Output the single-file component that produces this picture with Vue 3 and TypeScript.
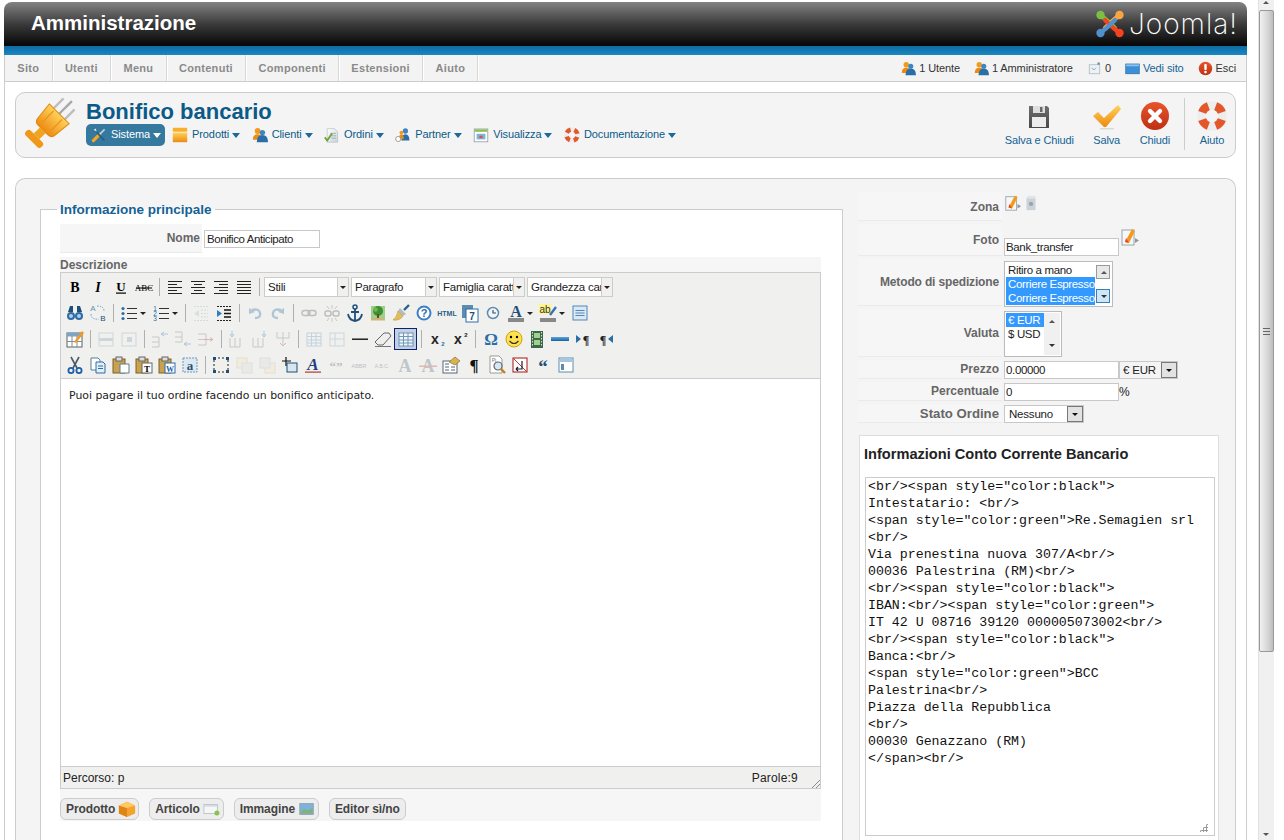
<template>
  <div class="page">
    <svg class="sprite" width="0" height="0" aria-hidden="true">
      <defs>
        <linearGradient id="g-orange" x1="0" y1="0" x2="0" y2="1"><stop offset="0" stop-color="#ffd25a"/><stop offset="1" stop-color="#ee8a12"/></linearGradient>
        <linearGradient id="g-red" x1="0" y1="0" x2="0" y2="1"><stop offset="0" stop-color="#e8552c"/><stop offset="1" stop-color="#bf2f12"/></linearGradient>
        <linearGradient id="g-blue" x1="0" y1="0" x2="0" y2="1"><stop offset="0" stop-color="#5aa7e0"/><stop offset="1" stop-color="#1c5f9e"/></linearGradient>
        <linearGradient id="g-paper" x1="0" y1="0" x2="1" y2="1"><stop offset="0" stop-color="#ffffff"/><stop offset="1" stop-color="#c9d3dc"/></linearGradient>
        <linearGradient id="g-disk" x1="0" y1="0" x2="0" y2="1"><stop offset="0" stop-color="#6e6e6e"/><stop offset="1" stop-color="#484848"/></linearGradient>
      </defs>

      <symbol id="plug" viewBox="0 0 50 50">
        <g transform="rotate(45 25 25)">
          <rect x="16" y="-2" width="2.400" height="15" fill="#bdbdbd"/>
          <rect x="23.800" y="-6" width="2.400" height="19" fill="#a8a8a8"/>
          <rect x="31.600" y="-2" width="2.400" height="15" fill="#bdbdbd"/>
          <path d="M11 12h28l-2 19q-1 4-5 4H18q-4 0-5-4z" fill="url(#g-orange)" stroke="#e08a12" stroke-width="1"/>
          <path d="M19 14v17M31 14v17" stroke="#e8961c" stroke-width="1.200"/>
          <rect x="21" y="35" width="8" height="9" fill="#f1a322"/>
          <rect x="14" y="44" width="22" height="7" rx="3" fill="#f0981a"/>
        </g>
      </symbol>

      <symbol id="tools" viewBox="0 0 20 20">
        <path d="M3 17 11 9" stroke="#f5a623" stroke-width="4" stroke-linecap="round"/>
        <path d="M17 3 10 10" stroke="#bcd6e6" stroke-width="2"/>
        <path d="M4 3 16 16" stroke="#2a5f86" stroke-width="2.400" stroke-linecap="round"/>
        <path d="M3 3.500 6 2 7 6z" fill="#d4e4ee"/>
      </symbol>
      <symbol id="box" viewBox="0 0 20 20">
        <rect x="1" y="7" width="18" height="12" fill="url(#g-orange)"/>
        <rect x="1" y="1" width="18" height="5" rx="1" fill="#f7b02e"/>
      </symbol>
      <symbol id="users" viewBox="0 0 20 20">
        <circle cx="7" cy="5" r="3.600" fill="#f39a1e"/>
        <path d="M1 16q0-7 6-7t6 7z" fill="#ec8a12"/>
        <circle cx="13" cy="7" r="3.400" fill="#3f85bf"/>
        <path d="M6 19q0-9 7-9t7 9z" fill="#2a6ea8"/>
      </symbol>
      <symbol id="orders" viewBox="0 0 20 20">
        <path d="M4 2h9l4 4v13H4z" fill="url(#g-paper)" stroke="#a9b4bb" stroke-width=".7"/>
        <path d="M8 8h7M8 11h7M9 14h6" stroke="#97a3ab"/>
        <path d="M1 13l3 4 6-9" fill="none" stroke="#6aa532" stroke-width="2.200"/>
      </symbol>
      <symbol id="partner" viewBox="0 0 20 20">
        <circle cx="13" cy="5" r="3.300" fill="#3f85bf"/>
        <path d="M8 17q0-8 5-8t5 8z" fill="#2a6ea8"/>
        <circle cx="8" cy="7" r="2.400" fill="#f39a1e"/>
        <path d="M5 15q0-6 3-6t3 6z" fill="#ec8a12"/>
        <circle cx="4" cy="15" r="3.200" fill="#fff" stroke="#8a8a8a"/>
      </symbol>
      <symbol id="view" viewBox="0 0 20 20">
        <rect x="1.500" y="2.500" width="17" height="16" fill="#fff" stroke="#8f9ba3"/>
        <rect x="2" y="3" width="16" height="3" fill="#8cc152"/>
        <rect x="4.500" y="8.500" width="11" height="7" fill="#7fb2d9"/>
        <rect x="8" y="11" width="4" height="3" fill="#d9534f"/>
      </symbol>
      <symbol id="life" viewBox="0 0 20 20">
        <circle cx="10" cy="10" r="7" fill="none" stroke="#ededed" stroke-width="5.600"/>
        <circle cx="10" cy="10" r="7" fill="none" stroke="#e2582a" stroke-width="5.600" stroke-dasharray="6 5" stroke-dashoffset="-2.500" pathLength="44"/>
      </symbol>
      <symbol id="msg" viewBox="0 0 20 20">
        <rect x="3" y="5" width="14" height="12" fill="#eef2f5" stroke="#aab4bb"/>
        <path d="M6 9l3 3 3-3" fill="none" stroke="#6d8ea8"/>
        <rect x="14" y="2" width="3" height="3" fill="#5d8cb0"/>
      </symbol>
      <symbol id="site" viewBox="0 0 20 20">
        <rect x="1" y="4" width="18" height="13" fill="#3d8fd6" stroke="#2a6ea8"/>
        <rect x="1.500" y="4.500" width="17" height="2.500" fill="#8cc3ee"/>
      </symbol>
      <symbol id="exit" viewBox="0 0 20 20">
        <circle cx="10" cy="10" r="9" fill="url(#g-red)"/>
        <rect x="8.400" y="4" width="3.200" height="8" rx="1" fill="#fff"/>
        <circle cx="10" cy="14.800" r="1.800" fill="#fff"/>
      </symbol>
      <symbol id="floppy" viewBox="0 0 30 30">
        <path d="M5 5h18l2 2v20H5z" fill="url(#g-disk)"/>
        <rect x="8" y="16" width="14" height="10" fill="#ececec"/>
        <rect x="9" y="5" width="12" height="7" fill="#dedede"/>
        <rect x="16" y="6" width="2.500" height="5" fill="#6a6a6a"/>
      </symbol>
      <symbol id="check" viewBox="0 0 30 30">
        <path d="M1 15l5-4 6 6L26 4l3 4-15 18h-2z" fill="url(#g-orange)"/>
        <rect x="8" y="27" width="14" height="1.400" fill="#d8d8d8"/>
      </symbol>
      <symbol id="close" viewBox="0 0 30 30">
        <circle cx="15" cy="15" r="14" fill="url(#g-red)"/>
        <path d="M10 10l10 10M20 10 10 20" stroke="#fff" stroke-width="4.400" stroke-linecap="round"/>
      </symbol>
      <symbol id="pencil" viewBox="0 0 20 20">
        <rect x="2" y="3" width="12" height="15" fill="#f7f7f7" stroke="#9aa4ab"/>
        <path d="M5 15 12 2l3 2-6 12z" fill="#f39a1e"/>
        <path d="M5 15 6 11l3 5z" fill="#e2482a"/>
        <path d="M15 11l4 2.500-4 2.500z" fill="#8a9aa5"/>
      </symbol>
      <symbol id="trash" viewBox="0 0 20 20">
        <path d="M5 4h10v14H5z" fill="#ccd3d8"/>
        <rect x="6" y="2" width="9" height="3" fill="#e1e5e8"/>
        <circle cx="10" cy="11" r="2.400" fill="#9aa6ae"/>
      </symbol>
      <symbol id="joomla" viewBox="0 0 30 30">
        <g fill="none" stroke-width="4.400" stroke-linecap="round">
          <path d="M6 7Q10 9 20 19" stroke="#7ac143"/>
          <path d="M24 7Q20 9 10 19" stroke="#f9a541"/>
          <path d="M24 23Q20 21 10 11" stroke="#f44321"/>
          <path d="M6 23Q10 21 20 11" stroke="#5091cd"/>
        </g>
        <circle cx="5.500" cy="6" r="4.200" fill="#7ac143"/>
        <circle cx="24.500" cy="6" r="4.200" fill="#f9a541"/>
        <circle cx="24.500" cy="24" r="4.200" fill="#f44321"/>
        <circle cx="5.500" cy="24" r="4.200" fill="#5091cd"/>
      </symbol>
      <symbol id="cube" viewBox="0 0 20 20">
        <path d="M10 2 19 6v9l-9 4-9-4V6z" fill="#f3a42c"/>
        <path d="M10 9v10l-9-4V6z" fill="#e08418"/>
        <path d="M10 2 19 6l-9 3-9-3z" fill="#ffc862"/>
      </symbol>
      <symbol id="article" viewBox="0 0 20 20">
        <rect x="1" y="5" width="15" height="10" fill="#f4f6f7" stroke="#b8c2c9"/>
        <rect x="1.500" y="5.500" width="14" height="2" fill="#d5dde2"/>
        <circle cx="15.500" cy="14.500" r="2.800" fill="#8cc152"/>
      </symbol>
      <symbol id="picture" viewBox="0 0 20 20">
        <rect x="2" y="4" width="15" height="12" fill="#7fb2d9" stroke="#8fa0ac"/>
        <path d="M3 13l4-3 4 2 5-3v6H3z" fill="#7eb27a"/>
      </symbol>

      <symbol id="a-left" viewBox="0 0 20 20"><path d="M3 4.500h14M3 7.500h9M3 10.500h14M3 13.500h9M3 16.500h14" stroke="#222"/></symbol>
      <symbol id="a-center" viewBox="0 0 20 20"><path d="M3 4.500h14M6 7.500h8M3 10.500h14M6 13.500h8M3 16.500h14" stroke="#222"/></symbol>
      <symbol id="a-right" viewBox="0 0 20 20"><path d="M3 4.500h14M8 7.500h9M3 10.500h14M8 13.500h9M3 16.500h14" stroke="#222"/></symbol>
      <symbol id="a-full" viewBox="0 0 20 20"><path d="M3 4.500h14M3 7.500h14M3 10.500h14M3 13.500h14M3 16.500h14" stroke="#222"/></symbol>
      <symbol id="find" viewBox="0 0 20 20">
        <path d="M3 9l2-6h3v6M17 9l-2-6h-3v6" fill="#1f4e79"/>
        <circle cx="6" cy="13" r="4" fill="#2f6aa3"/><circle cx="14" cy="13" r="4" fill="#2f6aa3"/>
        <circle cx="6" cy="13" r="2" fill="#a9cfee"/><circle cx="14" cy="13" r="2" fill="#a9cfee"/>
      </symbol>
      <symbol id="ul" viewBox="0 0 20 20"><path d="M8 5.500h10M8 10.500h10M8 15.500h10" stroke="#333"/><circle cx="4" cy="5.500" r="1.600" fill="#2a6ea8"/><circle cx="4" cy="10.500" r="1.600" fill="#2a6ea8"/><circle cx="4" cy="15.500" r="1.600" fill="#2a6ea8"/></symbol>
      <symbol id="outdent" viewBox="0 0 20 20"><path d="M3 3.500h14M10 7h7M10 10.500h7M10 14h7M3 17.500h14" stroke="#aaa" stroke-dasharray="2 1"/><path d="M8 7v7l-5-3.500z" fill="#9fc3de"/></symbol>
      <symbol id="indent" viewBox="0 0 20 20"><path d="M3 3.500h14M3 17.500h14" stroke="#222" stroke-dasharray="2 1"/><path d="M10 7h7M10 10.500h7M10 14h7" stroke="#111" stroke-width="1.400"/><path d="M3 7v7l5-3.500z" fill="#2a7fc4"/></symbol>
      <symbol id="undo" viewBox="0 0 20 20"><path d="M7 7q7-2 8 3t-5 5" fill="none" stroke="#2a6ea8" stroke-width="2.400"/><path d="M4 5v6l6-2z" fill="#2a6ea8"/></symbol>
      <symbol id="redo" viewBox="0 0 20 20"><path d="M13 7q-7-2-8 3t5 5" fill="none" stroke="#2a6ea8" stroke-width="2.400"/><path d="M16 5v6l-6-2z" fill="#2a6ea8"/></symbol>
      <symbol id="link" viewBox="0 0 20 20"><rect x="3" y="7.500" width="8" height="5" rx="2.500" fill="none" stroke="#555" stroke-width="1.400"/><rect x="9" y="7.500" width="8" height="5" rx="2.500" fill="none" stroke="#555" stroke-width="1.400"/></symbol>
      <symbol id="unlink" viewBox="0 0 20 20"><rect x="3" y="8" width="6" height="5" rx="2" fill="none" stroke="#555" stroke-width="1.500"/><rect x="11" y="8" width="6" height="5" rx="2" fill="none" stroke="#555" stroke-width="1.500"/><path d="M10 2v4M5 3l2 3M15 3l-2 3M10 15v4M5 18l2-3M15 18l-2-3" stroke="#777"/></symbol>
      <symbol id="anchor" viewBox="0 0 20 20"><circle cx="10" cy="4" r="2" fill="none" stroke="#1f4e79" stroke-width="1.500"/><path d="M10 6v12M6 9h8M3 11q1 6 7 7 6-1 7-7" fill="none" stroke="#1f4e79" stroke-width="1.800"/></symbol>
      <symbol id="image" viewBox="0 0 20 20"><rect x="3" y="3" width="14" height="14" fill="#9fcf8a"/><circle cx="10" cy="8" r="5" fill="#3f8f34"/><circle cx="7.500" cy="6.500" r="2.200" fill="#6cba4e"/><rect x="9" y="11" width="2" height="5" fill="#6b4a20"/><rect x="3" y="15" width="14" height="2.500" fill="#c8b77a"/></symbol>
      <symbol id="cleanup" viewBox="0 0 20 20"><path d="M13 7 18 2" stroke="#2a5f86" stroke-width="2.400"/><path d="M9 5l6 6-3 2-5-5z" fill="#b3bcc2"/><path d="M7 8l5 5q-3 5-10 4 4-3 5-9z" fill="#e3bd5d" stroke="#b48f2c" stroke-width=".5"/></symbol>
      <symbol id="time" viewBox="0 0 20 20"><circle cx="10" cy="10" r="5.500" fill="#f3f6f8" stroke="#5d8cb0" stroke-width="1.500"/><path d="M10 7v3h3" fill="none" stroke="#33536c" stroke-width="1.200"/></symbol>
      <symbol id="window" viewBox="0 0 20 20"><rect x="3" y="3" width="14" height="14" fill="#dbe8f3" stroke="#4f88ba"/><path d="M5.500 7.500h9M5.500 10h9M5.500 12.500h9" stroke="#4f88ba"/></symbol>
      <symbol id="table-edit" viewBox="0 0 20 20"><rect x="2" y="4" width="15" height="14" fill="#fff" stroke="#566"/><rect x="2" y="4" width="15" height="3.500" fill="#7aa5c9"/><path d="M7 7v11M12 7v11M2 12.500h15" stroke="#889"/><path d="M9 13 17 2l2 2-8 10z" fill="#f39a1e"/></symbol>
      <symbol id="row-a" viewBox="0 0 20 20"><rect x="3" y="4" width="14" height="13" fill="#eef2f5" stroke="#8fa0ac"/><rect x="3" y="9" width="14" height="3" fill="#8fa0ac"/></symbol>
      <symbol id="row-b" viewBox="0 0 20 20"><rect x="3" y="4" width="14" height="13" fill="#eef2f5" stroke="#8fa0ac"/><rect x="8" y="8" width="5" height="5" fill="#8fa0ac"/></symbol>
      <symbol id="ins-up" viewBox="0 0 20 20"><path d="M2 8h7v10H2M2 13h7" fill="none" stroke="#777"/><path d="M11 5h7M11 5l3-2M11 5l3 2" fill="none" stroke="#2a6ea8"/></symbol>
      <symbol id="ins-dn" viewBox="0 0 20 20"><path d="M2 3h7v10H2M2 8h7" fill="none" stroke="#777"/><path d="M11 15h7M11 15l3-2M11 15l3 2" fill="none" stroke="#2a6ea8"/></symbol>
      <symbol id="ins-del" viewBox="0 0 20 20"><path d="M2 5h8v11H2M2 10.500h8" fill="none" stroke="#777"/><path d="M8 10.500h9M17 10.500l-3-2M17 10.500l-3 2" fill="none" stroke="#c0392b"/></symbol>
      <symbol id="col-a" viewBox="0 0 20 20"><path d="M3 9v9h10V9M8 9v9" fill="none" stroke="#777"/><path d="M5 2v6M5 8 3 5M5 8l2-3" fill="none" stroke="#2a6ea8"/></symbol>
      <symbol id="col-b" viewBox="0 0 20 20"><path d="M3 9v9h10V9M8 9v9" fill="none" stroke="#777"/><path d="M14 2v6M14 8l-2-3M14 8l2-3" fill="none" stroke="#2a6ea8"/></symbol>
      <symbol id="col-del" viewBox="0 0 20 20"><path d="M4 3v6h12V3M10 3v14" fill="none" stroke="#777"/><path d="M10 17l-3-3M10 17l3-3" fill="none" stroke="#c0392b"/></symbol>
      <symbol id="grid" viewBox="0 0 20 20"><rect x="3" y="4" width="14" height="13" fill="#f2f6f9" stroke="#6e96b8"/><path d="M3 7.500h14M3 11h14M3 14h14M7.500 4v13M12 4v13" stroke="#6e96b8"/></symbol>
      <symbol id="split" viewBox="0 0 20 20"><rect x="3" y="4" width="14" height="13" fill="#eef2f5" stroke="#8fa0ac"/><path d="M8 4v13M3 10h14" stroke="#8fa0ac"/></symbol>
      <symbol id="hr" viewBox="0 0 20 20"><rect x="2" y="9.500" width="16" height="1.400" fill="#111"/></symbol>
      <symbol id="eraser" viewBox="0 0 20 20"><path d="M2 13 11 4h5l2 3-8 9H5z" fill="#eee" stroke="#666"/><rect x="2" y="17" width="16" height="1" fill="#777"/></symbol>
      <symbol id="smile" viewBox="0 0 20 20"><circle cx="10" cy="10" r="8" fill="#ffe14d" stroke="#c9a514"/><circle cx="7" cy="8" r="1.200"/><circle cx="13" cy="8" r="1.200"/><path d="M5.500 12q4.500 5 9 0" fill="none" stroke="#333" stroke-width="1.200"/></symbol>
      <symbol id="media" viewBox="0 0 20 20"><rect x="4" y="2" width="12" height="17" fill="#3a6a4a"/><rect x="7" y="4" width="6" height="5" fill="#a4d08e"/><rect x="7" y="11" width="6" height="5" fill="#a4d08e"/><path d="M5.500 3v15M14.500 3v15" stroke="#ddd" stroke-dasharray="1.500 1.500"/></symbol>
      <symbol id="hr-blue" viewBox="0 0 20 20"><rect x="1" y="8" width="18" height="4" fill="url(#g-blue)"/></symbol>
      <symbol id="cut" viewBox="0 0 20 20"><path d="M6 2l6 11M14 2 8 13" stroke="#4d5a66" stroke-width="1.600"/><circle cx="6" cy="15.500" r="2.600" fill="none" stroke="#1f5fa8" stroke-width="1.800"/><circle cx="14" cy="15.500" r="2.600" fill="none" stroke="#1f5fa8" stroke-width="1.800"/></symbol>
      <symbol id="copy" viewBox="0 0 20 20"><path d="M3 3h7l2 2v10H3z" fill="#fff" stroke="#5d7c95"/><path d="M8 7h7l2 2v9H8z" fill="#e3eef6" stroke="#2a6ea8"/><path d="M10 11h5M10 13.500h5" stroke="#2a6ea8"/></symbol>
      <symbol id="paste" viewBox="0 0 20 20"><rect x="2" y="4" width="12" height="14" fill="#c9a24f" stroke="#7a6128"/><rect x="5" y="2" width="6" height="4" fill="#ddd" stroke="#666"/><path d="M9 9h9v9H9z" fill="#fff" stroke="#5d7c95"/></symbol>
      <symbol id="layer" viewBox="0 0 20 20"><rect x="3" y="3" width="14" height="14" fill="none" stroke="#222" stroke-dasharray="2 2"/><path d="M2 2h3v3H2zM15 2h3v3h-3zM2 15h3v3H2zM15 15h3v3h-3z" fill="#1f4e79"/></symbol>
      <symbol id="fwd" viewBox="0 0 20 20"><rect x="3" y="3" width="10" height="10" fill="#f3e6bd" stroke="#c9bb8c"/><rect x="8" y="8" width="10" height="10" fill="#ddd" stroke="#bbb"/></symbol>
      <symbol id="back" viewBox="0 0 20 20"><rect x="8" y="8" width="10" height="10" fill="#f3e6bd" stroke="#c9bb8c"/><rect x="3" y="3" width="10" height="10" fill="#ddd" stroke="#bbb"/></symbol>
      <symbol id="absolute" viewBox="0 0 20 20"><path d="M6 2v9M2 6h9" stroke="#111" stroke-width="1.200"/><rect x="7" y="8" width="10" height="9" fill="#d9e6f0" stroke="#1f4e79"/></symbol>
      <symbol id="attribs" viewBox="0 0 20 20"><rect x="2" y="6" width="14" height="12" fill="#fff" stroke="#567"/><path d="M4 9h4M4 12h4M4 15h4M10 12h4M10 15h4" stroke="#567"/><path d="M8 7 14 2l5 4-5 4z" fill="#d9b34e" stroke="#7a6128" stroke-width=".6"/></symbol>
      <symbol id="nbsp" viewBox="0 0 20 20"><rect x="3" y="3" width="14" height="14" fill="#fff" stroke="#a11"/><path d="M3 3l14 14" stroke="#c0392b"/><path d="M12 6v8h-6M6 14l2-2M6 14l2 2" fill="none" stroke="#123" stroke-width="1.200"/></symbol>
      <symbol id="template" viewBox="0 0 20 20"><rect x="3" y="3" width="14" height="14" fill="#fff" stroke="#5d8cb0"/><rect x="4" y="4" width="12" height="3" fill="#a7c7df"/><rect x="5" y="9" width="3" height="6" fill="#5d8cb0"/></symbol>
    </svg>

    <div class="shell">
      <header class="header">
        <span class="header-title">Amministrazione</span>
        <span class="brand">
          <svg class="brand-mark"><use href="#joomla"/></svg>
          <span class="brand-name">Joomla!</span>
        </span>
      </header>
      <div class="stripe"></div>

      <nav class="menu">
        <a v-for="m in mainMenu" :key="m" class="menu-item">{{ m }}</a>
        <div class="status">
          <span v-for="s in statusItems" :key="s.label" class="status-item" :class="{ 'status-link': s.link }">
            <svg class="ic15"><use :href="'#' + s.icon"/></svg>{{ s.label }}
          </span>
        </div>
      </nav>

      <div class="content">
        <section class="toolbar">
          <svg class="toolbar-icon"><use href="#plug"/></svg>
          <div class="toolbar-head">
            <h1 class="title">Bonifico bancario</h1>
            <div class="submenu">
              <span v-for="(s, i) in subMenu" :key="s.label" class="sub-item" :class="{ 'sub-active': i === 0 }">
                <svg class="ic16"><use :href="'#' + s.icon"/></svg>
                <span class="sub-label">{{ s.label }}</span><i class="caret"></i>
              </span>
            </div>
          </div>
          <div class="actions">
            <span v-for="a in actions" :key="a.label" class="action" :class="{ 'action-sep': a.sep }">
              <svg class="ic30"><use :href="'#' + a.icon"/></svg>
              {{ a.label }}
            </span>
          </div>
        </section>

        <section class="card">
          <fieldset class="main-form">
            <legend>Informazione principale</legend>
            <div class="name-row">
              <label class="name-label">Nome</label>
              <input class="text-input name-input" value="Bonifico Anticipato" readonly>
            </div>
            <div class="desc-label">Descrizione</div>
            <div class="editor">
              <div class="ed-toolbar">
                <div class="ed-row">
                  <template v-for="(t, i) in edRows[0]" :key="i">
                    <span v-if="t.sep" class="ed-sep"></span>
                    <span v-else class="ed-btn">
                      <svg class="ic20" viewBox="0 0 20 20" v-html="iconMarkup(t.icon)"></svg>
                    </span>
                  </template>
                  <span v-for="s in edSelects" :key="s.text" class="ed-select" :class="s.cls">
                    <span class="ed-select-text">{{ s.text }}</span><span class="ed-select-arrow"></span>
                  </span>
                </div>
                <div v-for="(row, r) in edRows.slice(1)" :key="r" class="ed-row">
                  <template v-for="(t, i) in row" :key="i">
                    <span v-if="t.sep" class="ed-sep"></span>
                    <span v-else class="ed-btn" :class="{ 'ed-off': t.off, 'ed-on': t.on, 'ed-split': t.split }">
                      <svg class="ic20" viewBox="0 0 20 20" v-html="iconMarkup(t.icon)"></svg>
                    </span>
                  </template>
                </div>
              </div>
              <div class="ed-body">Puoi pagare il tuo ordine facendo un bonifico anticipato.</div>
              <div class="ed-status">
                <span>Percorso: p</span>
                <span class="ed-count">Parole:9</span>
                <span class="grip"></span>
              </div>
            </div>
            <div class="ed-buttons">
              <span v-for="b in editorButtons" :key="b.label" class="pill">
                {{ b.label }}<svg v-if="b.icon" class="pill-icon"><use :href="'#' + b.icon"/></svg>
              </span>
            </div>
          </fieldset>

          <aside class="side">
            <div class="field h-zona">
              <label class="field-label">Zona</label>
              <div class="field-value top">
                <svg class="ic18"><use href="#pencil"/></svg><svg class="ic18"><use href="#trash"/></svg>
              </div>
            </div>
            <div class="field h-foto">
              <label class="field-label">Foto</label>
              <div class="field-value foto">
                <input class="text-input side-input" value="Bank_transfer" readonly>
                <svg class="ic20 foto-icon"><use href="#pencil"/></svg>
              </div>
            </div>
            <div class="field h-metodo">
              <label class="field-label label-tight">Metodo di spedizione</label>
              <div class="field-value">
                <div class="listbox list-metodo">
                  <div class="list-options">
                    <div class="opt">Ritiro a mano</div>
                    <div class="opt sel">Corriere Espresso</div>
                    <div class="opt sel">Corriere Espresso</div>
                  </div>
                  <div class="list-scroll boxed">
                    <span class="sb-up"></span><span class="sb-down hot"></span>
                  </div>
                </div>
              </div>
            </div>
            <div class="field h-valuta">
              <label class="field-label">Valuta</label>
              <div class="field-value">
                <div class="listbox list-valuta">
                  <div class="list-options">
                    <div class="opt sel">€ EUR</div>
                    <div class="opt">$ USD</div>
                  </div>
                  <div class="list-scroll">
                    <span class="sb-up"></span><span class="sb-down"></span>
                  </div>
                </div>
              </div>
            </div>
            <div class="field h-line">
              <label class="field-label">Prezzo</label>
              <div class="field-value">
                <input class="text-input side-input" value="0.00000" readonly>
                <span class="combo combo-eur">€ EUR<i class="combo-arrow"></i></span>
              </div>
            </div>
            <div class="field h-line">
              <label class="field-label">Percentuale</label>
              <div class="field-value">
                <input class="text-input side-input" value="0" readonly>
                <span class="percent">%</span>
              </div>
            </div>
            <div class="field h-line">
              <label class="field-label label-large">Stato Ordine</label>
              <div class="field-value">
                <span class="combo combo-state">Nessuno<i class="combo-arrow"></i></span>
              </div>
            </div>

            <div class="bank">
              <h3 class="bank-title">Informazioni Conto Corrente Bancario</h3>
              <textarea class="bank-text" :value="bankText" readonly spellcheck="false" wrap="off"></textarea>
              <span class="bank-grip"></span>
            </div>
          </aside>
        </section>
      </div>
    </div>

    <div class="scrollbar">
      <span class="scroll-up"></span>
      <div class="scroll-thumb"><span class="scroll-grip"></span></div>
      <span class="scroll-down"></span>
    </div>
  </div>
</template>

<script setup lang="ts">
interface Tool {
  icon: string
  sep?: boolean
  off?: boolean
  on?: boolean
  split?: boolean
}

// "|" = separator, "~" = disabled, "!" = pressed, "+" = with dropdown arrow
const parseRow = (spec: string): Tool[] =>
  spec.split(' ').map((token) => {
    if (token === '|') return { icon: '', sep: true }
    return {
      icon: token.replace(/[~!+]/g, ''),
      off: token.startsWith('~'),
      on: token.startsWith('!'),
      split: token.endsWith('+'),
    }
  })

const edRows: Tool[][] = [
  'bold italic underline strike | a-left a-center a-right a-full |',
  'find replace | ul+ ol+ | ~outdent indent | ~undo ~redo | ~link ~unlink anchor image cleanup help html date time forecolor+ backcolor+ window',
  'table-edit | ~row-a ~row-b | ~ins-up ~ins-dn ~ins-del | ~col-a ~col-b ~col-del | ~grid ~split hr eraser !grid | sub sup | omega smile media hr-blue ltr rtl',
  'cut copy paste paste-t paste-w select-all | layer ~fwd ~back absolute styleprops ~cite ~abbr ~abc-dot ~big-a ~strike-a attribs pilcrow preview nbsp quote template',
].map(parseRow)

const SERIF = 'font-family="Liberation Serif" font-weight="700" text-anchor="middle"'
const SANS = 'font-family="Liberation Sans" text-anchor="middle"'
const CLIPBOARD = '<rect x="2" y="4" width="12" height="14" fill="#c9a24f" stroke="#7a6128"/><rect x="5" y="2" width="6" height="4" fill="#ddd" stroke="#666"/>'

// buttons that carry a letter keep it in place as real svg text, the rest come from the sprite
const letterIcons: Record<string, string> = {
  bold: `<text x="10" y="15" ${SERIF} font-size="14">B</text>`,
  italic: `<text x="10" y="15" ${SERIF} font-style="italic" font-size="14">I</text>`,
  underline: `<text x="10" y="14" ${SERIF} font-size="13">U</text><rect x="5" y="15.5" width="10" height="1.2"/>`,
  strike: `<text x="10" y="14" font-family="Liberation Serif" text-anchor="middle" font-size="9">ABC</text><rect x="2" y="10.5" width="16" height="1"/>`,
  replace: `<text x="5" y="8" ${SANS} font-size="8" fill="#6d8ea8">A</text><text x="15" y="18" ${SANS} font-size="8" fill="#1f4e79">B</text><path d="M3 11q0 6 8 5M9 3q7 0 7 5" fill="none" stroke="#5da0d6" stroke-dasharray="1.4 1.2"/>`,
  ol: `<path d="M8 5.5h10M8 10.5h10M8 15.5h10" stroke="#333"/><text x="4" y="8" ${SANS} font-size="6.5" fill="#2a6ea8">1</text><text x="4" y="13" ${SANS} font-size="6.5" fill="#2a6ea8">2</text><text x="4" y="18" ${SANS} font-size="6.5" fill="#2a6ea8">3</text>`,
  help: `<circle cx="10" cy="10" r="6.5" fill="#fff" stroke="#3d7fc4" stroke-width="2"/><text x="10" y="14" ${SANS} font-weight="700" font-size="11" fill="#2a6ea8">?</text>`,
  html: `<text x="10" y="13" ${SANS} font-weight="700" font-size="7" fill="#2a5f86">HTML</text>`,
  date: `<rect x="2" y="2" width="11" height="13" fill="#5d8cb0"/><rect x="6" y="6" width="12" height="13" fill="#fff" stroke="#2a6ea8"/><text x="12" y="17" ${SANS} font-weight="700" font-size="10" fill="#1f4e79">7</text>`,
  forecolor: `<text x="10" y="14" ${SERIF} font-size="16" fill="#1f4e79">A</text><rect x="2" y="15" width="16" height="4" fill="#888"/>`,
  backcolor: `<rect x="1" y="1" width="12" height="10" fill="#fff58a"/><text x="7" y="10" ${SANS} font-size="10" fill="#333">ab</text><path d="M12 12 18 4" stroke="#3d6fb5" stroke-width="2.4"/><rect x="2" y="15" width="16" height="4" fill="#888"/>`,
  sub: `<text x="8" y="15" ${SANS} font-weight="700" font-size="14" fill="#222">x</text><text x="16" y="17" ${SANS} font-weight="700" font-size="6" fill="#2a6ea8">2</text>`,
  sup: `<text x="8" y="15" ${SANS} font-weight="700" font-size="14" fill="#222">x</text><text x="16" y="8" ${SANS} font-weight="700" font-size="6" fill="#222">2</text>`,
  omega: `<text x="10" y="16" ${SERIF} font-size="17" fill="#2a6ea8">Ω</text>`,
  ltr: `<path d="M3 6v8l5-4z" fill="#2a6ea8"/><text x="13" y="15" ${SERIF} font-size="12" fill="#222">¶</text>`,
  rtl: `<text x="7" y="15" ${SERIF} font-size="12" fill="#222">¶</text><path d="M17 6v8l-5-4z" fill="#2a6ea8"/>`,
  'paste-t': `${CLIPBOARD}<rect x="8" y="8" width="10" height="10" fill="#fff" stroke="#666"/><text x="13" y="16.5" ${SERIF} font-size="9">T</text>`,
  'paste-w': `${CLIPBOARD}<rect x="8" y="8" width="10" height="10" fill="#fff" stroke="#2a6ea8"/><text x="13" y="16.5" ${SERIF} font-size="8" fill="#1f5fa8">W</text>`,
  'select-all': `<rect x="3" y="3" width="14" height="14" fill="#dce8f2" stroke="#6e96b8" stroke-dasharray="2 1"/><text x="10" y="15" ${SERIF} font-size="13" fill="#1f4e79">a</text>`,
  styleprops: `<text x="10" y="15" ${SERIF} font-style="italic" font-size="17" fill="#1f3f80">A</text><rect x="2" y="16.5" width="16" height="1.2" fill="#b03a2e"/>`,
  cite: `<text x="10" y="16" ${SERIF} font-size="13" fill="#556">“”</text>`,
  abbr: `<text x="10" y="13" ${SANS} font-size="5.5" fill="#556">ABBR</text>`,
  'abc-dot': `<text x="10" y="13" ${SANS} font-size="5" fill="#556">A.B.C.</text>`,
  'big-a': `<text x="10" y="17" ${SERIF} font-size="18" fill="#59707f">A</text>`,
  'strike-a': `<text x="10" y="17" ${SERIF} font-size="18" fill="#59707f">A</text><rect x="1" y="10.5" width="18" height="1.4" fill="#c0392b"/>`,
  pilcrow: `<text x="10" y="16" ${SERIF} font-size="17" fill="#111">¶</text>`,
  preview: `<path d="M3 1h9l3 3v14H3z" fill="#fff" stroke="#999"/><text x="7" y="7" ${SANS} font-size="5" fill="#778">Pi</text><circle cx="11" cy="11" r="4" fill="#d6e8f5" stroke="#666" stroke-width="1.2"/><path d="M14 14l4 4" stroke="#c17f1c" stroke-width="2.4"/>`,
  quote: `<text x="10" y="18" ${SERIF} font-size="19" fill="#1f4e79">“</text>`,
}

const iconMarkup = (name: string) => letterIcons[name] ?? `<use href="#${name}"/>`

const edSelects = [
  { text: 'Stili', cls: 'w-stili' },
  { text: 'Paragrafo', cls: 'w-par' },
  { text: 'Famiglia caratteri', cls: 'w-fam' },
  { text: 'Grandezza carattere', cls: 'w-gr' },
]

const mainMenu = ['Sito', 'Utenti', 'Menu', 'Contenuti', 'Componenti', 'Estensioni', 'Aiuto']

const statusItems = [
  { icon: 'users', label: '1 Utente' },
  { icon: 'users', label: '1 Amministratore' },
  { icon: 'msg', label: '0' },
  { icon: 'site', label: 'Vedi sito', link: true },
  { icon: 'exit', label: 'Esci' },
]

const subMenu = [
  { icon: 'tools', label: 'Sistema' },
  { icon: 'box', label: 'Prodotti' },
  { icon: 'users', label: 'Clienti' },
  { icon: 'orders', label: 'Ordini' },
  { icon: 'partner', label: 'Partner' },
  { icon: 'view', label: 'Visualizza' },
  { icon: 'life', label: 'Documentazione' },
]

const actions = [
  { icon: 'floppy', label: 'Salva e Chiudi' },
  { icon: 'check', label: 'Salva' },
  { icon: 'close', label: 'Chiudi' },
  { icon: 'life', label: 'Aiuto', sep: true },
]

const editorButtons = [
  { label: 'Prodotto', icon: 'cube' },
  { label: 'Articolo', icon: 'article' },
  { label: 'Immagine', icon: 'picture' },
  { label: 'Editor sì/no' },
]

const bankText = `<br/><span style="color:black">
Intestatario: <br/>
<span style="color:green">Re.Semagien srl
<br/>
Via prenestina nuova 307/A<br/>
00036 Palestrina (RM)<br/>
<br/><span style="color:black">
IBAN:<br/><span style="color:green">
IT 42 U 08716 39120 000005073002<br/>
<br/><span style="color:black">
Banca:<br/>
<span style="color:green">BCC
Palestrina<br/>
Piazza della Repubblica
<br/>
00030 Genazzano (RM)
</span><br/>`
</script>

<style>
html, body {
  margin: 0;
  overflow: hidden;
  background: #fff;
}
</style>

<style scoped>
.page {
  display: flex;
  width: 1284px;
  height: 840px;
  overflow: hidden;
  background: #fff;
  font-family: "Liberation Sans", Arial, sans-serif;
  font-size: 12px;
  color: #333;
}

.sprite {
  flex: none;
}

.ic15 { width: 15px; height: 15px; flex: none; }
.ic16 { width: 16px; height: 16px; flex: none; }
.ic18 { width: 18px; height: 18px; flex: none; }
.ic20 { width: 20px; height: 20px; flex: none; }
.ic30 { width: 30px; height: 30px; flex: none; }

.shell {
  flex: none;
  width: 1243px;
  margin-left: 4px;
  padding-top: 2px;
}

.header {
  display: flex;
  align-items: center;
  justify-content: space-between;
  height: 44px;
  padding: 0 9px 0 27px;
  border-radius: 8px 8px 0 0;
  background: linear-gradient(#838383, #3b3b3b 50%, #050505);
}

.header-title {
  margin-bottom: 2px;
  font-size: 20.500px;
  font-weight: 700;
  color: #fff;
}

.brand {
  display: flex;
  align-items: center;
  gap: 4px;
}

.brand-mark {
  width: 30px;
  height: 30px;
}

.brand-name {
  font-family: Inter, "Open Sans", sans-serif;
  font-weight: 200;
  font-size: 28px;
  line-height: 34px;
  letter-spacing: 1px;
  color: #fff;
}

.stripe {
  height: 9px;
  background: linear-gradient(#0c6ba3, #1b87c0);
}

.menu {
  display: flex;
  align-items: stretch;
  height: 26px;
  background: #f3f3f3;
  border-left: 1px solid #ccc;
  border-right: 1px solid #ccc;
  border-bottom: 1px solid #ccc;
}

.menu-item {
  display: flex;
  align-items: center;
  padding: 0 12.300px;
  border-right: 1px solid #d8d8d8;
  box-shadow: 1px 0 0 #fff;
  font-size: 11px;
  font-weight: 700;
  letter-spacing: .3px;
  color: #8a8a8a;
}

.status {
  display: flex;
  align-items: center;
  gap: 14px;
  margin-left: auto;
  padding-right: 10px;
  font-size: 11px;
  letter-spacing: -.1px;
}

.status-item {
  display: flex;
  align-items: center;
  gap: 3px;
}

.status-link {
  color: #146295;
}

.content {
  height: 757px;
  padding: 10px 10px 0;
  border-left: 1px solid #ccc;
  border-right: 1px solid #ccc;
}

.toolbar {
  display: flex;
  height: 66px;
  box-sizing: border-box;
  padding-left: 9px;
  border: 1px solid #ccc;
  border-radius: 10px;
  background: #f4f4f4;
}

.toolbar-icon {
  width: 50px;
  height: 50px;
  margin-top: 5px;
}

.toolbar-head {
  margin-left: 11px;
  padding-top: 6px;
}

.title {
  margin: 0;
  font-size: 22px;
  line-height: 25px;
  font-weight: 700;
  color: #0b5a87;
}

.submenu {
  display: flex;
  align-items: center;
  height: 22px;
}

.sub-item {
  display: flex;
  align-items: center;
  gap: 4px;
  height: 22px;
  margin-right: 11.500px;
  font-size: 11px;
  letter-spacing: -.1px;
  color: #0b5a87;
}

.sub-label {
  padding-bottom: 2px;
}

.sub-item.sub-active {
  margin-right: 7px;
  padding: 0 4px 0 5px;
  border-radius: 5px;
  background: #35799f;
  color: #fff;
}

.caret {
  width: 0;
  height: 0;
  margin-left: -1px;
  border: 4px solid transparent;
  border-top: 5px solid #1c6a9a;
  border-bottom: 0;
}

.sub-active .caret {
  border-top-color: #fff;
}

.actions {
  display: flex;
  align-items: flex-start;
  gap: 18px;
  margin-left: auto;
  padding: 8px 8px 0 0;
}

.action {
  display: flex;
  flex-direction: column;
  align-items: center;
  gap: 3px;
  font-size: 11px;
  letter-spacing: -.15px;
  color: #146295;
}

.action-sep {
  position: relative;
  margin-left: 9px;
}

.action-sep::before {
  content: "";
  position: absolute;
  left: -13px;
  top: -3px;
  width: 1px;
  height: 52px;
  background: #ccc;
}

.card {
  display: flex;
  margin-top: 20px;
  padding: 23px 0 0 24px;
  height: 660px;
  border: 1px solid #ccc;
  border-bottom: 0;
  border-radius: 10px 10px 0 0;
  background: #f4f4f4;
}

.main-form {
  flex: none;
  width: 803px;
  height: 700px;
  box-sizing: border-box;
  margin: 0;
  padding: 7px 21px 0 19px;
  border: 1px solid #ccc;
  background: #fff;
}

.main-form legend {
  margin-left: -3px;
  padding: 0 3px;
  font-size: 13.500px;
  font-weight: 700;
  color: #146295;
}

.name-row {
  display: flex;
  align-items: center;
  height: 29px;
}

.name-label {
  width: 142px;
  height: 29px;
  line-height: 29px;
  box-sizing: border-box;
  padding-right: 2px;
  flex: none;
  text-align: right;
  font-weight: 700;
  color: #666;
  background: #f6f6f6;
  border-bottom: 1px solid #eaeaea;
}

.text-input {
  height: 18px;
  box-sizing: border-box;
  margin: 0;
  padding: 0 1px;
  border: 1px solid #c8c8c8;
  font-family: inherit;
  font-size: 11.500px;
  letter-spacing: -.35px;
  color: #222;
  background: #fff;
  outline: none;
}

.name-input {
  width: 116px;
  margin-left: 2px;
  padding-left: 2px;
  letter-spacing: -.42px;
}

.desc-label {
  margin-top: 4px;
  height: 15px;
  line-height: 16px;
  font-weight: 700;
  color: #666;
  background: #f6f6f6;
}

.editor {
  border: 1px solid #ccc;
}

.ed-toolbar {
  height: 106px;
  box-sizing: border-box;
  padding: 1px 2px 0;
  background: #f0f0ee;
  border-bottom: 1px solid #ccc;
}

.ed-row {
  display: flex;
  align-items: center;
  height: 26px;
}

.ed-btn {
  flex: none;
  display: flex;
  align-items: center;
  justify-content: flex-start;
  box-sizing: border-box;
  width: 23px;
  height: 22px;
  padding-left: 1.500px;
}

.ed-off svg {
  opacity: .32;
}

.ed-on {
  border: 1px solid #0a246a;
  background: #c2cfe5;
  padding-left: .5px;
}

.ed-split {
  position: relative;
  width: 32px;
}

.ed-split::after {
  content: "";
  position: absolute;
  right: 3px;
  top: 10px;
  border: 3px solid transparent;
  border-top: 3px solid #222;
  border-bottom: 0;
}

.ed-sep {
  flex: none;
  width: 1px;
  height: 18px;
  margin: 0 3.500px;
  background: #b0b0b0;
}

.ed-select {
  flex: none;
  display: flex;
  box-sizing: border-box;
  height: 20px;
  margin-right: 2px;
  border: 1px solid #ccc;
  background: #fff;
  font-size: 11.500px;
  letter-spacing: -.25px;
  color: #222;
  line-height: 18px;
}

.w-stili { width: 85px; margin-left: 1px; }
.w-par { width: 86px; }
.w-fam { width: 86px; }
.w-gr { width: 86px; }

.ed-select-text {
  flex: 1;
  min-width: 0;
  padding-left: 3px;
  overflow: hidden;
  white-space: nowrap;
}

.ed-select-arrow {
  position: relative;
  flex: none;
  width: 10px;
  border-left: 1px solid #ccc;
  background: #f0f0ee;
}

.ed-select-arrow::after {
  content: "";
  position: absolute;
  left: 2px;
  top: 8px;
  border: 3px solid transparent;
  border-top: 3px solid #222;
  border-bottom: 0;
}

.ed-body {
  height: 387px;
  box-sizing: border-box;
  padding: 10px 8px;
  background: #fff;
  font-family: "DejaVu Sans", Verdana, sans-serif;
  font-size: 10.900px;
  line-height: 14px;
  color: #222;
}

.ed-status {
  display: flex;
  align-items: center;
  height: 22px;
  box-sizing: border-box;
  padding: 0 0 0 2px;
  border-top: 1px solid #ccc;
  background: #f0f0ee;
  color: #222;
}

.ed-count {
  margin-left: auto;
  margin-right: 12px;
  letter-spacing: .2px;
}

.grip {
  width: 10px;
  height: 10px;
  align-self: flex-end;
  background: repeating-linear-gradient(135deg, transparent 0 2px, #888 2px 3px);
  clip-path: polygon(100% 0, 100% 100%, 0 100%);
}

.ed-buttons {
  display: flex;
  gap: 10px;
  height: 32px;
  box-sizing: border-box;
  padding-top: 9px;
  background: #f6f6f6;
}

.pill {
  display: flex;
  align-items: center;
  gap: 3px;
  height: 22px;
  box-sizing: border-box;
  padding: 0 5px;
  border: 1px solid #ccc;
  border-radius: 6px;
  background: #ededed;
  font-weight: 700;
  letter-spacing: -.1px;
  color: #444;
}

.pill-icon {
  width: 18px;
  height: 18px;
  margin-right: -3px;
}

.side {
  flex: none;
  display: flex;
  flex-direction: column;
  gap: 3px;
  width: 362px;
  margin-left: 15px;
  margin-top: -10px;
}

.field {
  display: flex;
  flex: none;
}

.h-zona { height: 29px; }
.h-foto { height: 32px; }
.h-metodo { height: 47px; }
.h-valuta { height: 48px; }
.h-line { height: 19px; }

.field-label {
  flex: none;
  display: flex;
  align-items: center;
  justify-content: flex-end;
  width: 144px;
  box-sizing: border-box;
  padding-right: 3px;
  font-weight: 700;
  color: #666;
  background: #f6f6f6;
  border-bottom: 1px solid #ebebeb;
}

.h-zona .field-label,
.h-foto .field-label {
  padding-top: 1px;
}

.label-tight {
  letter-spacing: -.15px;
}

.label-large {
  font-size: 13.200px;
}

.field-value {
  display: flex;
  align-items: center;
  padding-left: 2px;
}

.field-value.top {
  align-items: flex-start;
  padding-top: 2px;
}

.foto {
  align-items: flex-end;
}

.foto-icon {
  align-self: flex-start;
  margin: 3px 0 0 1px;
}

.side-input {
  width: 115px;
  height: 18px;
}

.percent {
  font-size: 12px;
  color: #222;
}

.listbox {
  display: flex;
  box-sizing: border-box;
  border: 1px solid #bbb;
  background: #fff;
  font-size: 11.500px;
  letter-spacing: -.35px;
  color: #222;
}

.list-metodo {
  width: 109px;
  height: 46px;
  margin-top: 2px;
  padding: 1px;
}

.list-valuta {
  width: 58px;
  height: 46px;
  margin-top: 2px;
  padding: 1px;
}

.list-options {
  flex: 1;
  min-width: 0;
}

.opt {
  height: 14px;
  line-height: 14px;
  padding-left: 2px;
  white-space: nowrap;
  overflow: hidden;
}

.opt.sel {
  background: #3399ff;
  color: #fff;
}

.list-scroll {
  position: relative;
  flex: none;
  display: flex;
  flex-direction: column;
  justify-content: space-between;
  align-items: center;
  width: 16px;
  padding: 2px 0;
  box-sizing: border-box;
  background: #f0f0f0;
}

.list-scroll.boxed {
  background: #fff;
}

.sb-up, .sb-down {
  position: relative;
  display: block;
  width: 14px;
  height: 14px;
}

.boxed .sb-up, .boxed .sb-down {
  border: 1px solid #999;
  box-sizing: border-box;
  background: #e8e8e8;
}

.boxed .sb-down.hot {
  background: #cfe6f7;
  border-color: #3c7fb1;
}

.sb-up::after, .sb-down::after {
  content: "";
  position: absolute;
  left: 3.500px;
  top: 5px;
  border: 3px solid transparent;
}

.sb-up::after {
  border-bottom: 3px solid #555;
  border-top: 0;
}

.sb-down::after {
  border-top: 3px solid #333;
  border-bottom: 0;
}

.combo {
  position: relative;
  display: flex;
  align-items: center;
  box-sizing: border-box;
  height: 18px;
  padding-left: 3px;
  border: 1px solid #c8c8c8;
  background: #fff;
  font-size: 11.500px;
  letter-spacing: -.2px;
  color: #222;
}

.combo-eur {
  width: 59px;
  background: #f4f4f4;
}

.combo-state {
  width: 80px;
  padding-left: 4px;
}

.combo-arrow {
  position: absolute;
  right: 0;
  top: 0;
  bottom: 0;
  width: 16px;
  border: 1px solid #777;
  box-sizing: border-box;
  background: #e2e2e2;
}

.combo-arrow::after {
  content: "";
  position: absolute;
  left: 3.500px;
  top: 6px;
  border: 3.500px solid transparent;
  border-top: 3.500px solid #111;
  border-bottom: 0;
}

.bank {
  position: relative;
  flex: none;
  box-sizing: border-box;
  width: 360px;
  height: 500px;
  margin: 9px 0 0 1px;
  padding: 10px 3px 0 5px;
  border: 1px solid #ddd;
  background: #fff;
}

.bank-title {
  margin: 0 0 0 -1px;
  height: 31px;
  font-size: 14.600px;
  line-height: 16px;
  font-weight: 700;
  color: #222;
}

.bank-text {
  display: block;
  box-sizing: border-box;
  width: 350px;
  height: 359px;
  margin: 0;
  padding: 0 2px;
  border: 1px solid #ccc;
  font-family: "Liberation Mono", "Courier New", monospace;
  font-size: 13.250px;
  line-height: 17px;
  color: #111;
  background: #fff;
  outline: none;
  overflow: hidden;
  resize: none;
}

.bank-grip {
  position: absolute;
  left: 339px;
  top: 387px;
  width: 9px;
  height: 9px;
  background: radial-gradient(circle at 1.500px 1.500px, #999 1px, transparent 1.200px) 0 0 / 3px 3px;
  clip-path: polygon(100% 0, 100% 100%, 0 100%);
}

.scrollbar {
  flex: none;
  display: flex;
  flex-direction: column;
  width: 16px;
  height: 840px;
  margin-left: 11px;
  background: #f0f0f0;
  border-left: 1px solid #e2e2e2;
  box-sizing: border-box;
}

.scroll-up, .scroll-down {
  position: relative;
  flex: none;
  height: 10px;
}

.scroll-up::after, .scroll-down::after {
  content: "";
  position: absolute;
  left: 4px;
  border: 3.500px solid transparent;
}

.scroll-up::after {
  top: 1px;
  border-bottom: 3.500px solid #555;
  border-top: 0;
}

.scroll-down {
  margin-top: auto;
}

.scroll-down::after {
  top: 3px;
  border-top: 3.500px solid #555;
  border-bottom: 0;
}

.scroll-thumb {
  flex: none;
  display: flex;
  align-items: center;
  justify-content: center;
  height: 640px;
  border: 1px solid #999;
  border-radius: 2px;
  background: linear-gradient(90deg, #f0f0f0, #d6d6d6 60%, #bcbcbc);
}

.scroll-grip {
  width: 7px;
  height: 7px;
  background: repeating-linear-gradient(#666 0 1px, transparent 1px 3px);
}
</style>
